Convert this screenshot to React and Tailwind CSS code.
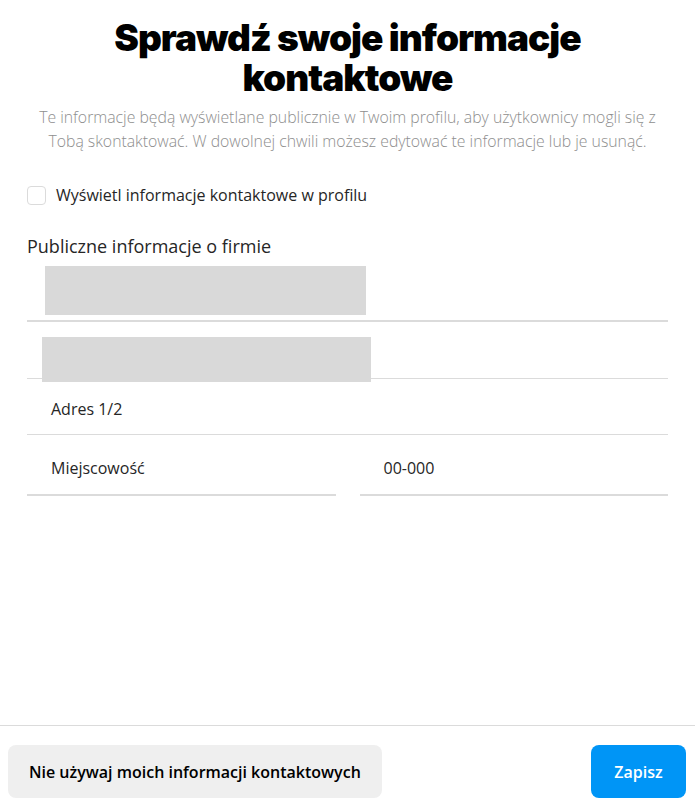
import React from 'react';

// Formularz sprawdzania informacji kontaktowych
const Field = ({ label, className = '' }) => (
  <div className={`flex items-center border-[#dbdbdb] ${className}`}>
    <span className="pl-6 text-[16px] text-[#262626]">{label}</span>
  </div>
);

const App = () => {
  return (
    <div className="w-[695px] h-[806px] bg-white flex flex-col" style={{ fontFamily: '"Open Sans", "Noto Sans", sans-serif' }}>
      <div className="flex-1 px-[27px]">
        <h1
          className="pt-[18px] text-center text-[37px] leading-[40px] font-black text-black tracking-[-1px]"
          style={{ fontFamily: 'Inter, "Noto Sans", sans-serif' }}
        >
          Sprawdź swoje informacje
          <br />
          kontaktowe
        </h1>
        <p className="mt-[7px] -mx-[4px] text-center text-[15.8px] leading-[24px] font-light text-[#8e8e8e]">
          Te informacje będą wyświetlane publicznie w Twoim profilu, aby użytkownicy mogli się z Tobą skontaktować. W dowolnej chwili możesz edytować te informacje lub je usunąć.
        </p>

        <label className="mt-[30px] flex items-center gap-[10px]">
          <span className="w-[19px] h-[19px] rounded-[4px] border border-[#dbdbdb] bg-white" />
          <span className="text-[16px] text-[#262626]">Wyświetl informacje kontaktowe w profilu</span>
        </label>

        <h2 className="mt-[26px] text-[18px] leading-[26px] text-[#262626]">Publiczne informacje o firmie</h2>

        <div className="mt-[7px] flex items-start h-[56px] border-b-2 border-[#dbdbdb]">
          <div className="ml-[18px] w-[321px] h-[49px] bg-[#d9d9d9]" />
        </div>
        <div className="flex items-end h-[57px] border-b border-[#dbdbdb]">
          <div className="ml-[15px] w-[329px] h-[45px] bg-[#d9d9d9] -mb-[4px]" />
        </div>
        <Field label="Adres 1/2" className="h-[56px] pt-[4px] border-b" />
        <div className="flex gap-[24px]">
          <div className="flex-1">
            <Field label="Miejscowość" className="h-[61px] pt-[7px] border-b-2" />
          </div>
          <div className="flex-1">
            <Field label="00-000" className="h-[61px] pt-[7px] border-b-2" />
          </div>
        </div>
      </div>

      <div className="border-t border-[#dbdbdb] h-[81px] flex items-start justify-between px-[8px] pt-[19px]">
        <button className="h-[53px] px-[21px] rounded-[8px] bg-[#efefef] text-[16px] font-semibold text-black">
          Nie używaj moich informacji kontaktowych
        </button>
        <button className="h-[53px] w-[95px] mr-[1px] rounded-[8px] bg-[#0095f6] text-[16px] font-semibold text-white">
          Zapisz
        </button>
      </div>
    </div>
  );
};

export default App;
